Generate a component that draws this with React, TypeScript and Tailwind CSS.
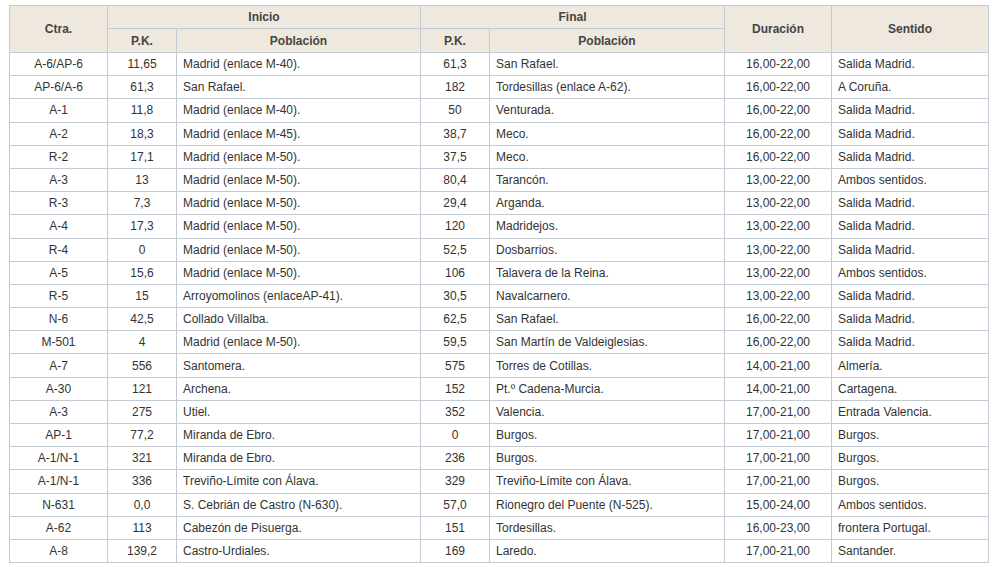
const rows: string[][] = [
  ["A-6/AP-6", "11,65", "Madrid (enlace M-40).", "61,3", "San Rafael.", "16,00-22,00", "Salida Madrid."],
  ["AP-6/A-6", "61,3", "San Rafael.", "182", "Tordesillas (enlace A-62).", "16,00-22,00", "A Coruña."],
  ["A-1", "11,8", "Madrid (enlace M-40).", "50", "Venturada.", "16,00-22,00", "Salida Madrid."],
  ["A-2", "18,3", "Madrid (enlace M-45).", "38,7", "Meco.", "16,00-22,00", "Salida Madrid."],
  ["R-2", "17,1", "Madrid (enlace M-50).", "37,5", "Meco.", "16,00-22,00", "Salida Madrid."],
  ["A-3", "13", "Madrid (enlace M-50).", "80,4", "Tarancón.", "13,00-22,00", "Ambos sentidos."],
  ["R-3", "7,3", "Madrid (enlace M-50).", "29,4", "Arganda.", "13,00-22,00", "Salida Madrid."],
  ["A-4", "17,3", "Madrid (enlace M-50).", "120", "Madridejos.", "13,00-22,00", "Salida Madrid."],
  ["R-4", "0", "Madrid (enlace M-50).", "52,5", "Dosbarrios.", "13,00-22,00", "Salida Madrid."],
  ["A-5", "15,6", "Madrid (enlace M-50).", "106", "Talavera de la Reina.", "13,00-22,00", "Ambos sentidos."],
  ["R-5", "15", "Arroyomolinos (enlaceAP-41).", "30,5", "Navalcarnero.", "13,00-22,00", "Salida Madrid."],
  ["N-6", "42,5", "Collado Villalba.", "62,5", "San Rafael.", "16,00-22,00", "Salida Madrid."],
  ["M-501", "4", "Madrid (enlace M-50).", "59,5", "San Martín de Valdeiglesias.", "16,00-22,00", "Salida Madrid."],
  ["A-7", "556", "Santomera.", "575", "Torres de Cotillas.", "14,00-21,00", "Almería."],
  ["A-30", "121", "Archena.", "152", "Pt.º Cadena-Murcia.", "14,00-21,00", "Cartagena."],
  ["A-3", "275", "Utiel.", "352", "Valencia.", "17,00-21,00", "Entrada Valencia."],
  ["AP-1", "77,2", "Miranda de Ebro.", "0", "Burgos.", "17,00-21,00", "Burgos."],
  ["A-1/N-1", "321", "Miranda de Ebro.", "236", "Burgos.", "17,00-21,00", "Burgos."],
  ["A-1/N-1", "336", "Treviño-Límite con Álava.", "329", "Treviño-Límite con Álava.", "17,00-21,00", "Burgos."],
  ["N-631", "0,0", "S. Cebrián de Castro (N-630).", "57,0", "Rionegro del Puente (N-525).", "15,00-24,00", "Ambos sentidos."],
  ["A-62", "113", "Cabezón de Pisuerga.", "151", "Tordesillas.", "16,00-23,00", "frontera Portugal."],
  ["A-8", "139,2", "Castro-Urdiales.", "169", "Laredo.", "17,00-21,00", "Santander."],
];

const leftCols = [2, 4, 6];

export default function App() {
  const th = "border border-[#c2cad4] bg-[#efe8df] font-bold text-[#444] text-center";
  return (
    <div className="w-[1000px] h-[567px] bg-white pt-[5px] pl-[9px] font-['Liberation_Sans',Arial,sans-serif] text-[12px] text-[#333]">
      <table className="border-collapse table-fixed w-[979px]">
        <colgroup>
          <col className="w-[98px]" />
          <col className="w-[69px]" />
          <col className="w-[244px]" />
          <col className="w-[69px]" />
          <col className="w-[235px]" />
          <col className="w-[107px]" />
          <col className="w-[157px]" />
        </colgroup>
        <thead>
          <tr className="h-[23px]">
            <th rowSpan={2} className={th}>Ctra.</th>
            <th colSpan={2} className={th}>Inicio</th>
            <th colSpan={2} className={th}>Final</th>
            <th rowSpan={2} className={th}>Duración</th>
            <th rowSpan={2} className={th}>Sentido</th>
          </tr>
          <tr className="h-[24px]">
            <th className={th}>P.K.</th>
            <th className={th}>Población</th>
            <th className={th}>P.K.</th>
            <th className={th}>Población</th>
          </tr>
        </thead>
        <tbody>
          {rows.map((r, i) => (
            <tr key={i} className="h-[23.2px]">
              {r.map((c, j) => (
                <td
                  key={j}
                  className={
                    leftCols.includes(j)
                      ? "border border-[#c2cad4] px-[6px] py-0 text-left whitespace-nowrap"
                      : "border border-[#c2cad4] px-[6px] py-0 text-center whitespace-nowrap"
                  }
                >
                  {c}
                </td>
              ))}
            </tr>
          ))}
        </tbody>
      </table>
    </div>
  );
}
